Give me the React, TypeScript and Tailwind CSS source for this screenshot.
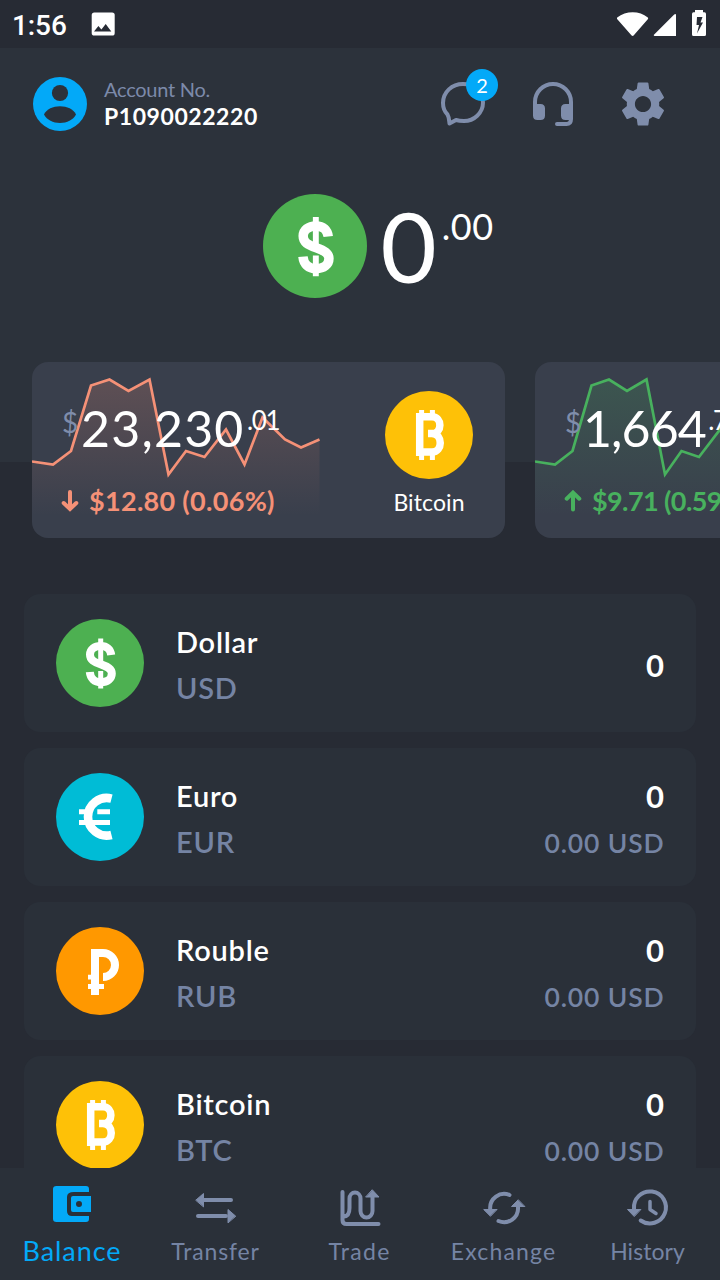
import type { ReactNode } from "react";
import { MdSettings } from "react-icons/md";

type CoinKind = "usd" | "eur" | "rub" | "btc";

const coinColors: Record<CoinKind, string> = {
  usd: "#4db051",
  eur: "#00bcd6",
  rub: "#ff9800",
  btc: "#fec107",
};

const coinMarks: Record<CoinKind, ReactNode> = {
  usd: (
    <g fill="none" stroke="#fff">
      <path strokeWidth="8" d="M55.2 36C54.6 30.5 51 27 44.8 27C38.4 27 34 30.6 34 35.6C34 41 38 43 45 45.4C52 47.8 55.8 50 55.8 54.6C55.8 59.8 51.4 63.2 45 63.2C38.4 63.2 34.4 59.4 33.8 53" />
      <path strokeWidth="5" d="M44.7 19.5V43M44.7 52V69.5" />
    </g>
  ),
  eur: (
    <g fill="none" stroke="#fff">
      <path strokeWidth="8.6" d="M55.5 25.6A18.8 18.8 0 1 0 55.5 62" />
      <path strokeWidth="5" d="M23 38.7H32M41.3 38.7H54M23 49.4H54" />
    </g>
  ),
  rub: (
    <g fill="none" stroke="#fff">
      <path strokeWidth="8" d="M39 68V26H47A12 12 0 0 1 47 50" />
      <path strokeWidth="4.8" d="M32 50.2H37M32 59.5H48" />
    </g>
  ),
  btc: (
    <g fill="none" stroke="#fff">
      <path strokeWidth="7.5" d="M34.7 22V65M34.7 25.8H47C57.5 25.8 57.5 42.4 47 42.6H43M47 42.6C58 43 58 61 47 61H34.7" />
      <path strokeWidth="5" d="M36.6 19V23M47.4 19V23M36.6 64V69M47.4 64V69" />
    </g>
  ),
};

function Coin({ kind, className }: { kind: CoinKind; className: string }) {
  return (
    <svg viewBox="0 0 88 88" className={`shrink-0 ${className}`}>
      <circle cx="44" cy="44" r="44" fill={coinColors[kind]} />
      {coinMarks[kind]}
    </svg>
  );
}

function StatusBar() {
  return (
    <div className="flex h-12 shrink-0 items-center bg-[#272b34] font-[Roboto,sans-serif]">
      <span className="ml-[12px] mt-[3px] w-[78.5px] text-[28px] font-medium leading-8 tracking-[-0.1px]">1:56</span>
      <svg viewBox="0 0 24 24" className="size-6">
        <rect x="0.7" y="0.5" width="23" height="23" rx="2.6" fill="#fff" />
        <path d="M3 19.5L7.4 14L10.4 17.4L14.7 12L20.3 19.5Z" fill="#272b34" />
      </svg>
      <svg viewBox="0 0 92 28" className="ml-auto mr-[12px] h-7 w-[92px]" fill="#fff">
        <path d="M1.2 7.6C10 .6 23.500 .6 31.800 7.6C32.300 8 32.300 8.500 32 9L17.600 25.600Q16.600 26.500 15.600 25.600L1.100 9Q.7 8.200 1.200 7.600Z" />
        <path d="M38.600 26Q37 25.800 38.200 24.400L58.200 4.500Q60 3.400 60 5V26Z" />
        <path fillRule="evenodd" d="M79 0H87V2.200H88.500Q90 2.200 90 4V24.500Q90 26 88.500 26H77.500Q76 26 76 24.500V4Q76 2.200 77.500 2.200H79ZM81 7L80.500 15H83L81 23.500L87 12.500H84.500L86.500 7Z" />
      </svg>
    </div>
  );
}

function Header() {
  return (
    <header className="flex h-28 shrink-0 items-center pl-[33px] pr-[50px]">
      <svg viewBox="0 0 54 54" className="size-[54px]">
        <circle cx="27" cy="27" r="27" fill="#03a9f8" />
        <circle cx="27" cy="16" r="8.1" fill="#2c323b" />
        <path d="M11 37.500C13.500 32 20 29.200 27 29.200S40.500 32 43 37.500C40 43 34 46 27 46S14 43 11 37.500Z" fill="#2c323b" />
      </svg>
      <div className="ml-[17px] mt-[-3px] flex flex-col">
        <span className="text-[20px] leading-[26px] tracking-[-0.25px] text-[#7c8aaa]">Account No.</span>
        <span className="text-[23px] font-bold leading-[28px] tracking-[0.56px]">P1090022220</span>
      </div>
      <div className="ml-auto flex items-center">
        <div className="relative mr-[46px] h-12 w-[46px]">
          <svg viewBox="0 0 46 48" className="h-12 w-[46px]" fill="none" stroke="#7f8dab" strokeWidth="4" strokeLinejoin="round">
            <path d="M9.500 43.500C9 40 9 37 7.500 34.500C4.500 31.500 3 27.500 3 23C3 12 12 4 23 4C34 4 43 12 43 22.500C43 33 34 41 24 41C21 41 18.500 40.800 16 40Z" />
          </svg>
          <span className="absolute left-[26px] top-[-11px] flex size-8 items-center justify-center rounded-full bg-[#03a9f8] pb-px text-[20px] leading-8">2</span>
        </div>
        <svg viewBox="0 0 44 48" className="h-12 w-11" fill="none" stroke="#7f8dab" strokeWidth="4">
          <path d="M3 30V22A18 18 0 0 1 39 22V39Q39 44 34.500 44H25" strokeLinecap="round" />
          <path d="M1 24H8.500Q13 24 13 28.500V35.500Q13 40 8.500 40H5.500Q1 40 1 35.500ZM41 24H33.500Q29 24 29 28.500V35.500Q29 40 33.500 40H37Q41 40 41 35.500Z" fill="#7f8dab" stroke="none" />
        </svg>
        <MdSettings className="ml-[40px] size-[54px] text-[#7f8dab]" />
      </div>
    </header>
  );
}

type TickerProps = {
  whole: string;
  wholeClass: string;
  cents: string;
  change: string;
  changeClass: string;
  coin: CoinKind;
  name: string;
  up: boolean;
  color: string;
  points: string;
  width: number;
};

function Ticker({ whole, wholeClass, cents, change, changeClass, coin, name, up, color, points, width }: TickerProps) {
  return (
    <article className="relative flex h-44 w-[473px] shrink-0 overflow-hidden rounded-2xl bg-[#393f4c]">
      <svg viewBox="0 0 288 176" className="absolute left-0 top-0 h-44 w-72">
        <defs>
          <linearGradient id={`fill-${coin}-${name}`} gradientUnits="userSpaceOnUse" x1="0" y1="17" x2="0" y2="154">
            <stop offset="0" stopColor={color} stopOpacity="0.2" />
            <stop offset="1" stopColor={color} stopOpacity="0" />
          </linearGradient>
        </defs>
        <polygon points={`0,154 ${points} ${width},154`} fill={`url(#fill-${coin}-${name})`} />
        <polyline points={points} fill="none" stroke={color} strokeWidth="2.7" />
      </svg>
      <div className="relative w-[353px] pl-[30px] pt-[36px]">
        <div className="flex h-[60px] items-start whitespace-nowrap">
          <span className="w-[19px] text-[28px] leading-[48px] text-[#7f8dab]">$</span>
          <span className={`text-[50px] leading-[60px] ${wholeClass}`}>{whole}</span>
          <span className="ml-[2.5px] text-[26px] leading-[44px] tracking-[-1.4px]">{cents}</span>
        </div>
        <div className="ml-[-1px] mt-[26px] flex h-[34px] items-center whitespace-nowrap" style={{ color }}>
          <svg viewBox="0 0 18 22" className="h-[22px] w-[18px]" fill="none" stroke={color} strokeWidth="4" strokeLinecap="round">
            {up ? <path d="M9 19.500V3M2.700 8.700L9 2.600L15.300 8.700" /> : <path d="M9 2V18.500M2.700 13L9 19L15.300 13" />}
          </svg>
          <span className={`ml-[10px] text-[27px] font-bold leading-[34px] ${changeClass}`}>{change}</span>
        </div>
      </div>
      <div className="relative flex w-[88px] flex-col items-center pt-[29px]">
        <Coin kind={coin} className="size-[88px]" />
        <span className="mt-[8px] text-[23px] leading-[30px] tracking-[0.1px]">{name}</span>
      </div>
    </article>
  );
}

type WalletProps = { coin: CoinKind; name: string; code: string; sub?: string };

const wallets: WalletProps[] = [
  { coin: "usd", name: "Dollar", code: "USD" },
  { coin: "eur", name: "Euro", code: "EUR", sub: "0.00 USD" },
  { coin: "rub", name: "Rouble", code: "RUB", sub: "0.00 USD" },
  { coin: "btc", name: "Bitcoin", code: "BTC", sub: "0.00 USD" },
];

function WalletRow({ coin, name, code, sub }: WalletProps) {
  return (
    <li className="flex h-[138px] shrink-0 items-center rounded-2xl bg-[#2a3039] px-8">
      <Coin kind={coin} className="size-[88px]" />
      <div className="ml-8 mt-[3px] flex flex-col text-[29px] font-semibold leading-[46px] tracking-[0.75px]">
        <span>{name}</span>
        <span className="tracking-[0.75px] text-[#7584a4]">{code}</span>
      </div>
      <div className={`ml-auto flex flex-col text-right ${sub ? "mt-[6px]" : "mt-[4px]"}`}>
        <span className="text-[31px] font-bold leading-[46px]">0</span>
        {sub && <span className="mr-[-0.5px] text-[26.5px] font-semibold leading-[49px] tracking-[0.85px] text-[#7584a4]">{sub}</span>}
      </div>
    </li>
  );
}

const navItems: { label: string; labelClass: string; icon: ReactNode }[] = [
  {
    label: "Transfer",
    labelClass: "tracking-[0.85px]",
    icon: (
      <>
        <path d="M8 12H39M6 28H34" />
        <path d="M4 12L11.500 5.500V18.500ZM43.500 28L36 21.500V34.500Z" fill="#7f8dab" strokeWidth="1" />
      </>
    ),
  },
  {
    label: "Trade",
    labelClass: "tracking-[1.3px]",
    icon: (
      <>
        <path d="M6.500 4V32Q6.500 36 10.500 36H42.500M8 28.500Q13.500 28 13.500 20V10.500A5.500 6 0 0 1 24.500 10.500V23A6 6.500 0 0 0 36.500 23V8" />
        <path d="M36.500 2L43 9H30Z" fill="#7f8dab" strokeWidth="1" />
      </>
    ),
  },
  {
    label: "Exchange",
    labelClass: "tracking-[1.15px]",
    icon: (
      <>
        <path d="M29.500 7A14 14 0 0 0 10.200 21M18.500 33A14 14 0 0 0 38 19" />
        <path d="M10.200 28L3.700 21.500H16.700ZM38 12L31.500 18.500H44.500Z" fill="#7f8dab" strokeWidth="1" />
      </>
    ),
  },
  {
    label: "History",
    labelClass: "tracking-[0.05px]",
    icon: (
      <>
        <path d="M16.700 32.500A16 16 0 1 0 10 21" />
        <path d="M26 13.500V21.500L32 25.500" strokeWidth="3.500" />
        <path d="M10 28.300L3.500 21.500H16.500Z" fill="#7f8dab" strokeWidth="1" />
      </>
    ),
  },
];

function BottomNav() {
  return (
    <nav className="grid h-28 shrink-0 grid-cols-5 bg-[#2a3039]">
      <div className="flex flex-col items-center pt-[16px] text-[#03a9f8]">
        <svg viewBox="0 0 40 40" className="size-10">
          <path d="M4.500 2H34Q37 2 37 5V8H22Q15 8 15 13V27Q15 32 20 32H37V35Q37 38 34 38H4.500Q1 38 1 35V5Q1 2 4.500 2Z" fill="#03a9f8" />
          <path fillRule="evenodd" d="M21 12H39V28H21Q19 28 19 26V14Q19 12 21 12ZM27 17A3 3 0 1 0 27 23A3 3 0 1 0 27 17Z" fill="#03a9f8" />
        </svg>
        <span className="mt-[10px] text-[27px] leading-[34px] tracking-[0.95px]">Balance</span>
      </div>
      {navItems.map((item) => (
        <div key={item.label} className="flex flex-col items-center pr-px pt-5 text-[#7584a4]">
          <svg viewBox="0 0 48 40" className="h-10 w-12" fill="none" stroke="#7f8dab" strokeWidth="4" strokeLinecap="round" strokeLinejoin="round">
            {item.icon}
          </svg>
          <span className={`mt-[7px] text-[23px] leading-[32px] ${item.labelClass}`}>{item.label}</span>
        </div>
      ))}
    </nav>
  );
}

export default function App() {
  return (
    <div className="flex h-[1280px] w-[720px] flex-col overflow-hidden bg-[linear-gradient(to_bottom,#2c323b_462px,#272b34_462px)] font-[Lato,sans-serif] text-white">
      <StatusBar />
      <Header />
      <section className="flex h-[172px] shrink-0 items-center pl-[263px]">
        <Coin kind="usd" className="size-[104px]" />
        <div className="ml-[13.5px] flex items-start">
          <span className="text-[97px] leading-[100px]">0</span>
          <span className="ml-[5px] mt-[10px] text-[36px] leading-[40px] tracking-[0.5px]">.00</span>
        </div>
      </section>
      <section className="mt-[30px] flex shrink-0 gap-[30px] overflow-hidden pl-8">
        <Ticker
          whole="23,230"
          wholeClass="tracking-[1.2px]"
          cents=".01"
          change="$12.80 (0.06%)"
          changeClass="tracking-[0.3px]"
          coin="btc"
          name="Bitcoin"
          up={false}
          color="#f59177"
          width={287.5}
          points="0,99.5 21,102.5 39,89 59,23.5 77.5,17.5 96.5,29 117.5,17.5 136.5,112.5 154,89 172.5,95 194,67.5 212.5,102.5 230.5,55.5 253,77.5 269,85.5 287.5,77.5"
        />
        <Ticker
          whole="1,664"
          wholeClass="ml-[-1px] tracking-[-0.9px]"
          cents=".7"
          change="$9.71 (0.59%)"
          changeClass="tracking-[-0.6px]"
          coin="eur"
          name="Ethereum"
          up
          color="#48b15e"
          width={274}
          points="0,99.5 20,102.5 37.5,89 56.5,23.5 74,17.5 92,29 111.5,17.5 130,112.5 146.5,89 164,95 185,67.5 202,102.5 220,55.5 241,77.5 256,85.5 274,77.5"
        />
      </section>
      <ul className="mt-14 flex min-h-0 flex-1 flex-col gap-4 overflow-hidden px-6">
        {wallets.map((wallet) => (
          <WalletRow key={wallet.code} {...wallet} />
        ))}
      </ul>
      <BottomNav />
    </div>
  );
}
